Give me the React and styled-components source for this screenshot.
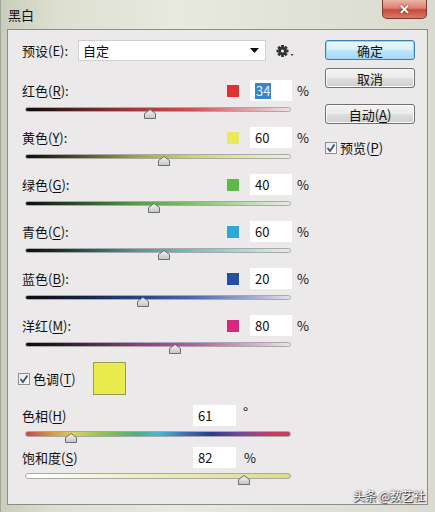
import React from 'react'
import styled, { createGlobalStyle } from 'styled-components'

const Global = createGlobalStyle`
  html, body { margin: 0; padding: 0; }
  body {
    font-family: "Noto Sans CJK SC", "Liberation Sans", sans-serif;
    font-size: 13px;
    color: #111;
  }
`

const Window = styled.div`
  position: relative;
  width: 435px;
  height: 512px;
  box-sizing: border-box;
  display: flex;
  flex-direction: column;
  background: linear-gradient(90deg, #c9cdbb 0%, #dcdfd0 12%, #e8e9df 40%, #e2e3d8 65%, #d9dad0 100%);
  border-left: 1px solid #a3a797;
  overflow: hidden;
`

const TitleBar = styled.div`
  height: 29px;
  display: flex;
  justify-content: space-between;
  align-items: flex-start;
  padding-left: 7px;
`

const Title = styled.div`
  line-height: 29px;
  font-size: 13px;
`

const CloseBtn = styled.div`
  width: 43px;
  height: 18px;
  margin-right: 8px;
  border: 1px solid #7a3a30;
  border-top: none;
  border-radius: 0 0 5px 5px;
  background: linear-gradient(180deg, #eab4a8 0%, #dc806e 45%, #c84a3a 55%, #d87a66 100%);
  display: flex;
  align-items: center;
  justify-content: center;
  color: #fff;
  font-family: "Liberation Sans", sans-serif;
  font-weight: bold;
  font-size: 13px;
  text-shadow: 0 0 2px #5a1a12;
`

const Client = styled.div`
  flex: 1;
  margin: 0 7px 7px 6px;
  border: 1px solid #8c8c8c;
  background: #ebe9ea;
  display: flex;
  padding: 10px 0 0 14px;
`

const LeftPane = styled.div`
  width: 290px;
`

const RightPane = styled.div`
  margin-left: 13px;
  width: 90px;
  display: flex;
  flex-direction: column;
`

const Row = styled.div`
  display: flex;
  align-items: center;
  height: 21px;
`

const Label = styled.div`
  width: ${p => p.w}px;
  flex: none;
  white-space: nowrap;
`

const Select = styled.div`
  width: 176px;
  height: 19px;
  border: 1px solid #cfcfcf;
  background: #fff;
  display: flex;
  align-items: center;
  justify-content: space-between;
  padding: 0 6px 0 4px;
  box-sizing: content-box;
`

const Swatch = styled.div`
  width: ${p => p.size}px;
  height: ${p => p.size}px;
  box-sizing: border-box;
  background: ${p => p.color};
  border: ${p => (p.size > 20 ? '1px solid #9a9a55' : 'none')};
  flex: none;
`

const NumBox = styled.div`
  width: ${p => p.w}px;
  height: 21px;
  margin-left: ${p => p.ml}px;
  background: #fff;
  box-sizing: border-box;
  display: flex;
  align-items: center;
  padding-left: 5px;
  flex: none;
`

const Selected = styled.span`
  background: #3b86c8;
  color: #dfefff;
  line-height: 16px;
  padding: 0 1px;
`

const Unit = styled.div`
  margin-left: ${p => p.ml}px;
  align-self: ${p => (p.sup ? 'flex-start' : 'center')};
  line-height: ${p => (p.sup ? '14px' : '21px')};
  font-size: ${p => (p.sup ? '14px' : '13px')};
`

const Block = styled.div`
  margin-bottom: ${p => p.mb}px;
`

const Track = styled.div`
  position: relative;
  margin: ${p => p.mt}px 0 0 3px;
  width: 266px;
  height: ${p => p.h}px;
  border: 1px solid #a9a9a9;
  border-radius: 3px;
  box-sizing: border-box;
  background: ${p => p.bg};
`

const ThumbWrap = styled.div`
  position: absolute;
  top: ${p => p.top}px;
  width: 12px;
  height: 10px;
  margin-left: -6px;
  line-height: 0;
`

const U = styled.span`
  text-decoration: underline;
  text-underline-offset: 2px;
`

const Button = styled.div`
  height: 20px;
  box-sizing: border-box;
  border: 1px solid ${p => (p.primary ? '#3c7fb1' : '#707070')};
  border-radius: 3px;
  background: ${p =>
    p.primary
      ? 'linear-gradient(180deg, #eaf6fd 0%, #d9f0fc 50%, #bee6fd 52%, #a7d9f5 100%)'
      : 'linear-gradient(180deg, #f2f2f2 0%, #ebebeb 50%, #dddddd 52%, #cfcfcf 100%)'};
  box-shadow: ${p => (p.primary ? 'inset 0 0 0 1px #9fd4f3' : 'inset 0 0 0 1px #fcfcfc')};
  display: flex;
  align-items: center;
  justify-content: center;
  margin-top: ${p => p.mt}px;
  font-size: 13px;
`

const CheckRow = styled.div`
  display: flex;
  align-items: center;
  margin-top: ${p => p.mt || 0}px;
  gap: 3px;
`

const Box = styled.div`
  width: 12px;
  height: 12px;
  box-sizing: border-box;
  border: 1px solid #8e8f8f;
  background: linear-gradient(135deg, #e6e6e6, #ffffff);
  display: flex;
  align-items: center;
  justify-content: center;
  flex: none;
`

const TintRow = styled.div`
  display: flex;
  align-items: center;
  margin: 0 0 10px -4px;
`

const TintLabel = styled.span`
  margin-left: 3px;
  width: 60px;
  flex: none;
`

const Watermark = styled.div`
  position: absolute;
  right: 10px;
  bottom: 8px;
  color: #fff;
  font-size: 12px;
  letter-spacing: -0.3px;
  text-shadow: 0 0 2px #333, 1px 1px 1px #222;
`

function Thumb({ x, top }) {
  return (
    <ThumbWrap style={{ left: x }} top={top}>
      <svg width="12" height="10" viewBox="0 0 12 10">
        <defs>
          <linearGradient id="tg" x1="0" y1="0" x2="0" y2="1">
            <stop offset="0" stopColor="#f4f4f4" />
            <stop offset="1" stopColor="#c4c4c4" />
          </linearGradient>
        </defs>
        <polygon points="0.5,4.5 6,0.5 11.5,4.5 11.5,9.5 0.5,9.5" fill="url(#tg)" stroke="#6d6d6d" />
      </svg>
    </ThumbWrap>
  )
}

function Check() {
  return (
    <Box>
      <svg width="10" height="10" viewBox="0 0 10 10">
        <path d="M1.5 5 L4 8 L8.5 1.5" fill="none" stroke="#3a4f86" strokeWidth="1.8" />
      </svg>
    </Box>
  )
}

function Gear() {
  return (
    <svg width="20" height="14" viewBox="0 0 20 14" style={{ marginLeft: 10 }}>
      <g transform="translate(6.5,7)" fill="#333">
        {[0, 45, 90, 135].map(a => (
          <rect key={a} x="-1.4" y="-6" width="2.8" height="12" transform={`rotate(${a})`} />
        ))}
        <circle r="4.2" />
        <circle r="1.6" fill="#ebe9ea" />
      </g>
      <path d="M14.5 10 L17.5 10 L16 12 Z" fill="#333" />
    </svg>
  )
}

const channels = [
  { name: '红色', key: 'R', color: '#e03232', value: 34, sel: true,
    bg: 'linear-gradient(90deg, #0a0a0a 0%, #5e2224 20%, #a8383b 42%, #cf4a4d 62%, #e6a4a7 85%, #efe2e4 100%)' },
  { name: '黄色', key: 'Y', color: '#eaea58', value: 60,
    bg: 'linear-gradient(90deg, #0a0a0a 0%, #4f4f22 20%, #a3a344 42%, #d2d45c 62%, #e6e8a8 85%, #eeeee0 100%)' },
  { name: '绿色', key: 'G', color: '#5fb84a', value: 40,
    bg: 'linear-gradient(90deg, #0a0a0a 0%, #2d4f2a 20%, #5a9a4c 42%, #7fbf68 62%, #c0dcb4 85%, #e8ece4 100%)' },
  { name: '青色', key: 'C', color: '#2ea8d8', value: 60,
    bg: 'linear-gradient(90deg, #0a0a0a 0%, #224a4a 20%, #4c9a96 42%, #6cc0c0 62%, #b4dcdc 85%, #e4ecee 100%)' },
  { name: '蓝色', key: 'B', color: '#2450a0', value: 20,
    bg: 'linear-gradient(90deg, #0a0a0a 0%, #142040 20%, #27447e 42%, #4a64a8 62%, #a0a8d0 85%, #e2e2ee 100%)' },
  { name: '洋红', key: 'M', color: '#d8287e', value: 80,
    bg: 'linear-gradient(90deg, #0a0a0a 0%, #40203f 20%, #8a3c88 42%, #b456aa 62%, #d8a4d0 85%, #eee2ec 100%)' },
]

const pos = v => Math.round(((v + 200) / 500) * 266)

export default function App() {
  return (
    <>
      <Global />
      <Window>
        <TitleBar>
          <Title>黑白</Title>
          <CloseBtn>✕</CloseBtn>
        </TitleBar>
        <Client>
          <LeftPane>
            <Row>
              <Label w={56}>预设(E):</Label>
              <Select>
                <span>自定</span>
                <svg width="9" height="6" viewBox="0 0 9 6"><path d="M0 0 H9 L4.5 5 Z" fill="#111" /></svg>
              </Select>
              <Gear />
            </Row>
            <div style={{ height: 19 }} />
            {channels.map(c => (
              <Block key={c.key} mb={15}>
                <Row>
                  <Label w={205}>
                    {c.name}(<U>{c.key}</U>):
                  </Label>
                  <Swatch size={12} color={c.color} />
                  <NumBox w={42} ml={11}>
                    {c.sel ? <Selected>{c.value}</Selected> : c.value}
                  </NumBox>
                  <Unit ml={5}>%</Unit>
                </Row>
                <Track mt={6} h={5} bg={c.bg}>
                  <Thumb x={pos(c.value)} top={1} />
                </Track>
              </Block>
            ))}
            <TintRow>
              <Check />
              <TintLabel>
                色调(<U>T</U>)
              </TintLabel>
              <Swatch size={33} color="#e8ea4e" />
            </TintRow>
            <Block mb={10}>
              <Row>
                <Label w={171}>
                  色相(<U>H</U>)
                </Label>
                <NumBox w={43} ml={0}>61</NumBox>
                <Unit ml={7} sup>°</Unit>
              </Row>
              <Track mt={5} h={6} bg="linear-gradient(90deg, #c04a44 0%, #d49a4a 10%, #d8d45a 18%, #8cc050 30%, #4cb080 42%, #4ab8d0 50%, #3a66b0 62%, #2a3c8c 70%, #7a4a9a 82%, #c03c6a 92%, #c83c5a 100%)">
                <Thumb x={45} top={1} />
              </Track>
            </Block>
            <Block mb={0}>
              <Row>
                <Label w={171}>
                  饱和度(<U>S</U>)
                </Label>
                <NumBox w={43} ml={0}>82</NumBox>
                <Unit ml={8}>%</Unit>
              </Row>
              <Track mt={5} h={6} bg="linear-gradient(90deg, #ffffff 0%, #efefc8 40%, #dcdc8a 100%)">
                <Thumb x={218} top={1} />
              </Track>
            </Block>
          </LeftPane>
          <RightPane>
            <Button primary mt={0}>确定</Button>
            <Button mt={8}>取消</Button>
            <Button mt={16}>
              自动(<U>A</U>)
            </Button>
            <CheckRow mt={14}>
              <Check />
              <span>
                预览(<U>P</U>)
              </span>
            </CheckRow>
          </RightPane>
        </Client>
        <Watermark>头条 @数艺社</Watermark>
      </Window>
    </>
  )
}
